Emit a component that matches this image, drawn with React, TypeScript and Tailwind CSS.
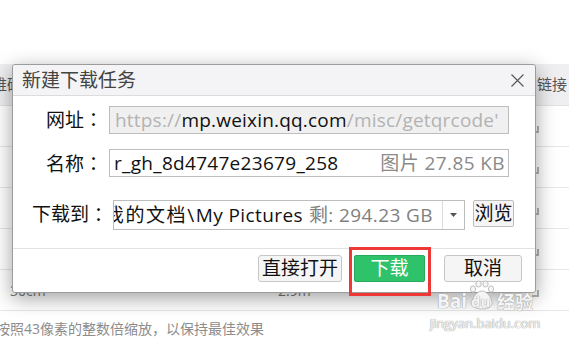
import type { FC } from 'react';

const font = "font-['Open_Sans','Noto_Sans_CJK_SC',sans-serif]";

const CornerMark: FC = () => (
  <span className="block h-[7px] w-[7px] border-b-2 border-r-2 border-[#b5b5b5]" />
);

// colon centred in its box, as the reference draws it
const Colon: FC = () => <span className="font-['Noto_Sans_CJK_JP',sans-serif]">：</span>;

const TableRow: FC<{ left?: string; mid?: string }> = ({ left, mid }) => (
  <div className="flex h-[41px] items-center border-b border-[#e6e6e6]">
    <span className="w-[278px] pl-[10px] text-[14px] text-[#777]">{left}</span>
    <span className="w-[254px] text-[14px] text-[#777]">{mid}</span>
    <span className="mt-[6px]"><CornerMark /></span>
  </div>
);

const DownloadDialog: FC = () => (
  <div className="absolute left-[12px] top-[64px] flex h-[229px] w-[524px] flex-col rounded-[3px] border border-[#9c9c9c] bg-white shadow-[0_5px_20px_rgba(0,0,0,0.38)]">
    <div className="flex h-[31px] items-center justify-between rounded-t-[3px] border-b border-[#dcdcdc] bg-[#f4f4f6] pl-[9px] pr-[11px]">
      <span className="text-[19px] leading-none text-[#444]">新建下载任务</span>
      <svg className="h-[13px] w-[13px]" viewBox="0 0 13 13">
        <path d="M0.5 0.5L12.5 12.5M12.5 0.5L0.5 12.5" stroke="#555" strokeWidth="1.1" fill="none" />
      </svg>
    </div>

    <div className="flex h-[152px] flex-col pt-[9px] text-[19px] text-[#111]">
      <div className="flex items-center gap-[6px]">
        <span className="w-[90px] text-right">网址<Colon /></span>
        <div className="flex h-[28px] w-[400px] items-center overflow-hidden whitespace-nowrap border border-[#bdbdbd] bg-[#f0f0f0] pl-[5px] tracking-[0.2px]">
          <span className="text-[#b3b3b3]">https://</span>
          <span className="text-[#111]">mp.weixin.qq.com</span>
          <span className="text-[#b3b3b3]">/misc/getqrcode'</span>
        </div>
      </div>

      <div className="mt-[14px] flex items-center gap-[6px]">
        <span className="w-[90px] text-right">名称<Colon /></span>
        <div className="flex h-[28px] w-[400px] items-center justify-between overflow-hidden whitespace-nowrap border border-[#bdbdbd] bg-white pl-[4px] pr-[3px]">
          <span className="tracking-[0.3px]">r_gh_8d4747e23679_258</span>
          <span className="tracking-[0.4px] text-[#8a8a8a]">图片 27.85 KB</span>
        </div>
      </div>

      <div className="mt-[22px] flex items-start gap-[5px]">
        <span className="flex h-[28px] w-[95px] items-center justify-end">下载到<Colon /></span>
        <div className="flex h-[30px] w-[352px] items-stretch border border-[#bdbdbd] bg-white">
          <div className="flex flex-1 items-center justify-end overflow-hidden whitespace-nowrap pr-[9px] tracking-[0.4px]">
            <span className="tracking-[1.6px]">我的文档\</span>
            <span>My Pictures</span>
            <span className="ml-[6px] text-[#808080]">剩: 294.23 GB</span>
          </div>
          <div className="flex w-[22px] items-center justify-center border-l border-[#dcdcdc]">
            <svg className="h-[4px] w-[7px]" viewBox="0 0 7 4">
              <path d="M0 0H7L3.5 4Z" fill="#555" />
            </svg>
          </div>
        </div>
        <button className="ml-[3px] flex h-[27px] w-[41px] items-center justify-center rounded-[2px] border border-[#bcbcbc] bg-[#f5f5f5] text-[19px] text-[#111]">
          浏览
        </button>
      </div>
    </div>

    <div className="flex h-[44px] items-start justify-end border-t border-[#e2e2e2] pr-[13px] pt-[6px] text-[19px]">
      <button className="flex h-[27px] w-[84px] items-center justify-center rounded-[3px] border border-[#c6c6c6] bg-[#f5f5f5] text-[#111]">
        直接打开
      </button>
      <div className="relative ml-[12px]">
        <button className="flex h-[27px] w-[71px] items-center justify-center rounded-[2px] border border-[#25a95b] bg-[#2ec36b] text-white">
          下载
        </button>
        <span className="absolute -left-[5px] -top-[8px] h-[49px] w-[82px] border-[3px] border-[#ee3838]" />
      </div>
      <button className="ml-[19px] flex h-[27px] w-[78px] items-center justify-center rounded-[3px] border border-[#c6c6c6] bg-[#f5f5f5] text-[#111]">
        取消
      </button>
    </div>
  </div>
);

const Watermark: FC = () => (
  <div className="pointer-events-none absolute left-[433px] top-[280px] flex w-[104px] flex-col items-center whitespace-nowrap text-[#f5f5f5] [text-shadow:0_0_1px_#9a9a9a,0_0_1px_#9a9a9a]">
    <div className="flex items-end leading-none">
      <span className="text-[19px] font-bold">Bai</span>
      <div className="relative mx-[1px] h-[31px] w-[28px]">
        <svg className="absolute left-0 top-0 h-[31px] w-[28px]" viewBox="0 0 28 31">
          <g fill="#f5f5f5" stroke="#b0b0b0" strokeWidth="0.8">
            <ellipse cx="5" cy="9" rx="2.6" ry="3.2" />
            <ellipse cx="10.5" cy="4" rx="2.7" ry="3" />
            <ellipse cx="17.5" cy="4" rx="2.7" ry="3" />
            <ellipse cx="23" cy="9" rx="2.6" ry="3.2" />
            <path d="M14 11c-5 0-10 7-10 12 0 4 4 6 10 6s10-2 10-6c0-5-5-12-10-12z" />
          </g>
        </svg>
        <span className="absolute bottom-[2px] left-[3px] text-[15px] font-bold">du</span>
      </div>
      <span className="text-[18px] font-bold">经验</span>
    </div>
    <span className="mt-[6px] text-[13px] leading-none">jingyan.baidu.com</span>
  </div>
);

export default function App() {
  return (
    <div className={`relative h-[343px] w-[569px] overflow-hidden bg-white ${font}`}>
      <div className="h-[64px]" />
      <div className="flex h-[42px] items-center border-b border-[#e2e2e2] bg-[#efeff1] text-[15px] text-[#555]">
        <span className="-ml-[23px] w-[560px]">二维码</span>
        <span>链接</span>
      </div>
      <TableRow />
      <TableRow />
      <TableRow />
      <TableRow />
      <TableRow left="30cm" mid="2.9m" />
      <p className="-ml-[4px] mt-[11px] whitespace-nowrap text-[14px] leading-none text-[#8c8c8c]">
        按照43像素的整数倍缩放，以保持最佳效果
      </p>
      <DownloadDialog />
      <Watermark />
    </div>
  );
}
